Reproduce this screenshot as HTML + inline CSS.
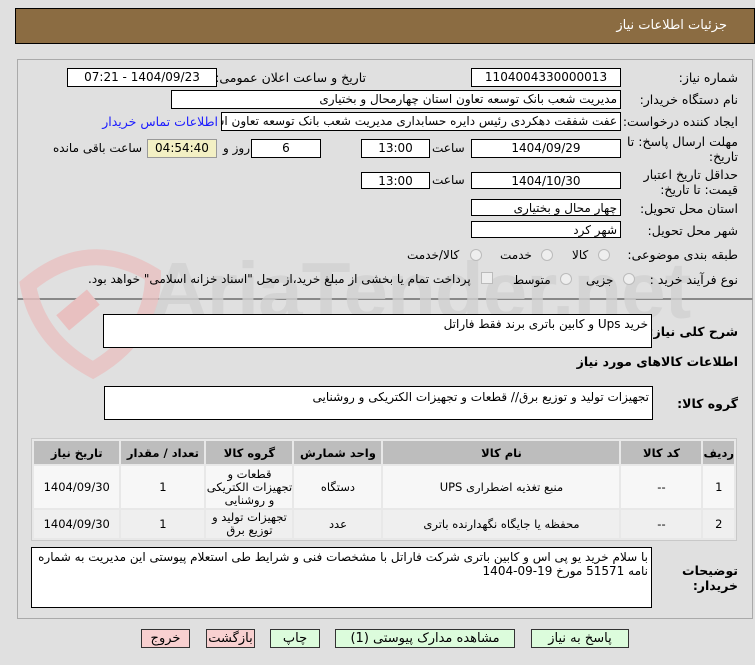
<!DOCTYPE html>
<html><head><meta charset="utf-8"><style>
*{margin:0;padding:0;box-sizing:border-box}
body{width:755px;height:665px;background:#e0e0e0;font-family:"DejaVu Sans","Liberation Sans",sans-serif;font-size:12px;color:#000;position:relative;overflow:hidden}
.a{position:absolute;white-space:nowrap}
.box{position:absolute;background:#fff;border:1px solid #000;direction:rtl;padding:0 3px;line-height:16px;font-size:12px;overflow:hidden;white-space:nowrap}
.c{text-align:center}
.l{position:absolute;direction:rtl;text-align:right;right:17px;font-size:12.5px;white-space:nowrap}
.radio{position:absolute;width:12px;height:12px;border:1px solid #bbb;border-radius:50%;background:#eee}
.btn{position:absolute;top:629px;height:19px;border:1px solid #333;font-size:13px;text-align:center;line-height:17px;direction:rtl}
table{position:absolute;left:31px;top:438px;width:706px;border-collapse:separate;border-spacing:2px;background:#e8e8e8;border:1px solid #c8c8c8;direction:rtl;font-size:11.5px}
th{background:#bdbdbd;height:23px;font-weight:bold}
td{text-align:center;line-height:13px}
</style></head><body>
<div class="a" style="left:15px;top:8px;width:740px;height:36px;background:#8b6c42;border:1px solid #000"></div>
<div class="a" style="right:28px;top:18px;color:#fff;font-size:13px;direction:rtl">جزئیات اطلاعات نیاز</div>

<div class="a" style="left:17px;top:59px;width:736px;height:240px;border:1px solid #aaa;border-bottom:1px solid #888"></div>
<div class="a" style="left:17px;top:299px;width:736px;height:320px;border:1px solid #aaa;border-top:1px solid #888"></div>

<!-- watermark -->
<svg class="a" style="left:18px;top:245px" width="150" height="135" viewBox="0 0 150 135"><path d="M10 40 Q70 -10 135 30 Q135 90 75 125 Q20 95 10 40Z" fill="none" stroke="#e8c0c0" stroke-width="16" opacity="0.8"/><rect x="40" y="55" width="40" height="20" fill="#e8c0c0" transform="rotate(-40 60 65)"/></svg>
<div class="a" style="left:150px;top:245px;font-size:80px;font-weight:bold;color:#d2d2d2;font-family:'Liberation Sans',sans-serif;letter-spacing:-1px;opacity:.8">AriaTender.net</div>

<div class="l" style="top:70px">شماره نیاز:</div>
<div class="box c" style="left:471px;top:68px;width:150px;height:19px">1104004330000013</div>
<div class="a" style="right:389px;top:70px;direction:rtl;font-size:12.5px">تاریخ و ساعت اعلان عمومی:</div>
<div class="box c" style="left:67px;top:68px;width:150px;height:19px">1404/09/23 - 07:21</div>

<div class="l" style="top:92px">نام دستگاه خریدار:</div>
<div class="box" style="left:171px;top:90px;width:450px;height:19px">مدیریت شعب بانک توسعه تعاون استان چهارمحال و بختیاری</div>

<div class="l" style="top:114px">ایجاد کننده درخواست:</div>
<div class="box" style="left:221px;top:112px;width:400px;height:19px">عفت شفقت دهکردی رئیس دایره حسابداری مدیریت شعب بانک توسعه تعاون استان</div>
<div class="a" style="right:537px;top:114px;color:#1a1aff;direction:rtl;font-size:12.5px">اطلاعات تماس خریدار</div>

<div class="l" style="top:134px;line-height:15px">مهلت ارسال پاسخ: تا<br>تاریخ:</div>
<div class="box c" style="left:471px;top:139px;width:150px;height:19px">1404/09/29</div>
<div class="a" style="left:432px;top:141px">ساعت</div>
<div class="box c" style="left:361px;top:139px;width:69px;height:19px">13:00</div>
<div class="box c" style="left:251px;top:139px;width:70px;height:19px">6</div>
<div class="a" style="left:223px;top:141px">روز و</div>
<div class="box c" style="left:147px;top:139px;width:70px;height:19px;background:#f3f0c4;border-color:#999">04:54:40</div>
<div class="a" style="left:53px;top:141px">ساعت باقی مانده</div>

<div class="l" style="top:167px;line-height:15px">حداقل تاریخ اعتبار<br>قیمت: تا تاریخ:</div>
<div class="box c" style="left:471px;top:172px;width:150px;height:17px">1404/10/30</div>
<div class="a" style="left:432px;top:173px">ساعت</div>
<div class="box c" style="left:361px;top:172px;width:69px;height:17px">13:00</div>

<div class="l" style="top:201px">استان محل تحویل:</div>
<div class="box" style="left:471px;top:199px;width:150px;height:17px">چهار محال و بختیاری</div>
<div class="l" style="top:223px">شهر محل تحویل:</div>
<div class="box" style="left:471px;top:221px;width:150px;height:17px">شهر کرد</div>

<div class="l" style="top:247px">طبقه بندی موضوعی:</div>
<div class="radio" style="left:598px;top:249px"></div><div class="a" style="left:572px;top:248px">کالا</div>
<div class="radio" style="left:541px;top:249px"></div><div class="a" style="left:500px;top:248px">خدمت</div>
<div class="radio" style="left:470px;top:249px"></div><div class="a" style="left:407px;top:248px">کالا/خدمت</div>

<div class="l" style="top:272px">نوع فرآیند خرید :</div>
<div class="radio" style="left:623px;top:273px"></div><div class="a" style="left:586px;top:273px">جزیی</div>
<div class="radio" style="left:560px;top:273px"></div><div class="a" style="left:513px;top:273px">متوسط</div>
<div class="a" style="left:481px;top:272px;width:12px;height:12px;border:1px solid #bbb;background:#eee"></div>
<div class="a" style="left:88px;top:272px;direction:rtl">پرداخت تمام یا بخشی از مبلغ خرید،از محل "اسناد خزانه اسلامی" خواهد بود.</div>

<div class="l" style="top:324px;font-weight:bold">شرح کلی نیاز:</div>
<div class="box" style="left:103px;top:314px;width:549px;height:34px;line-height:18px">خرید Ups و کابین باتری برند فقط فاراتل</div>
<div class="l" style="top:354px;font-weight:bold">اطلاعات کالاهای مورد نیاز</div>
<div class="l" style="top:396px;font-weight:bold">گروه کالا:</div>
<div class="box" style="left:104px;top:386px;width:549px;height:34px;line-height:20px">تجهیزات تولید و توزیع برق// قطعات و تجهیزات الکتریکی و روشنایی</div>

<table>
<tr><th style="width:26px">ردیف</th><th style="width:80px">کد کالا</th><th style="width:236px">نام کالا</th><th style="width:87px">واحد شمارش</th><th style="width:86px">گروه کالا</th><th style="width:83px">تعداد / مقدار</th><th>تاریخ نیاز</th></tr>
<tr style="background:#f7f7f7;height:42px"><td>1</td><td>--</td><td>منبع تغذیه اضطراری UPS</td><td>دستگاه</td><td>قطعات و تجهیزات الکتریکی و روشنایی</td><td>1</td><td>1404/09/30</td></tr>
<tr style="background:#efefef;height:28px"><td>2</td><td>--</td><td>محفظه یا جایگاه نگهدارنده باتری</td><td>عدد</td><td>تجهیزات تولید و توزیع برق</td><td>1</td><td>1404/09/30</td></tr>
</table>

<div class="l" style="top:563px;font-weight:bold;line-height:15px">توضیحات<br>خریدار:</div>
<div class="box" style="left:31px;top:547px;width:621px;height:61px;white-space:normal;line-height:14px;padding-top:2px">با سلام خرید یو پی اس و کابین باتری شرکت فاراتل با مشخصات فنی و شرایط طی استعلام پیوستی این مدیریت به شماره نامه 51571 مورخ 19-09-1404</div>

<div class="btn" style="left:141px;width:49px;background:#f8d0d0">خروج</div>
<div class="btn" style="left:206px;width:49px;background:#f8d0d0">بازگشت</div>
<div class="btn" style="left:270px;width:50px;background:#dcfcdc">چاپ</div>
<div class="btn" style="left:335px;width:180px;background:#dcfcdc">مشاهده مدارک پیوستی (1)</div>
<div class="btn" style="left:531px;width:98px;background:#dcfcdc">پاسخ به نیاز</div>
</body></html>
